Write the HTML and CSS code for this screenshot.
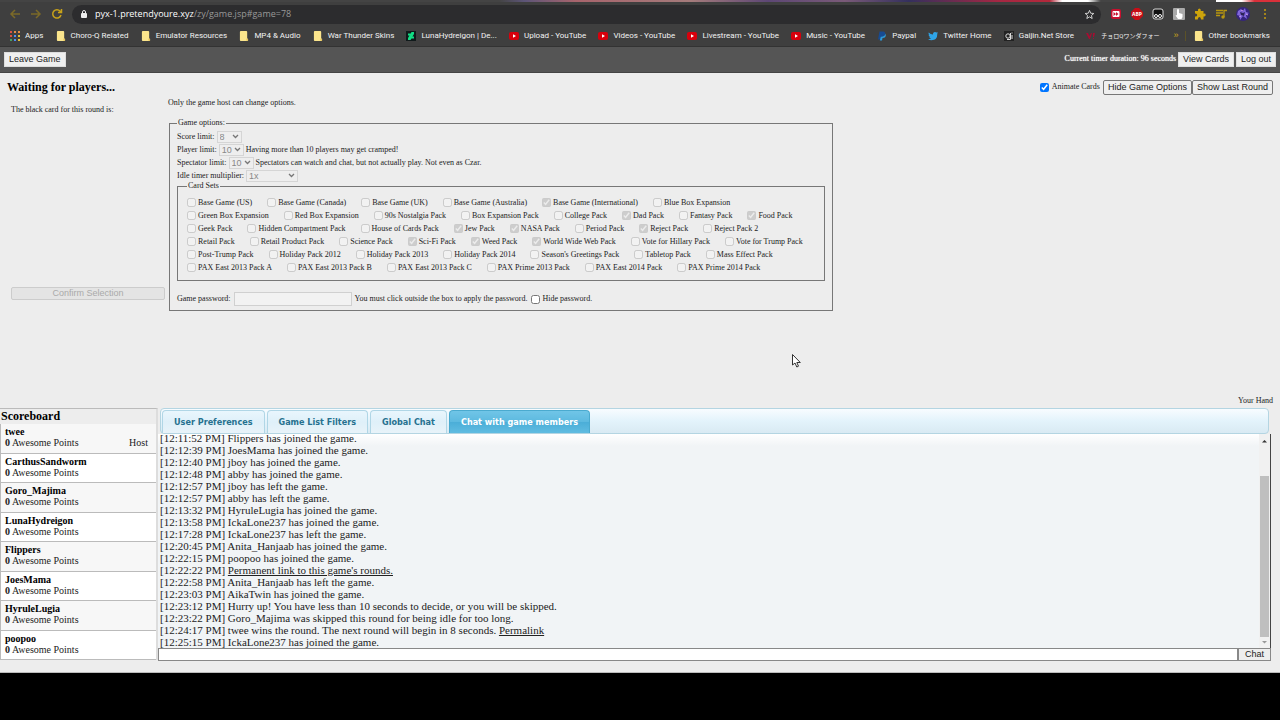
FILE: index.html
```
<!DOCTYPE html>
<html lang="en">
<head>
    <meta charset="UTF-8">
    <meta name="viewport" content="width=device-width, initial-scale=1.0">
    <title>Pretend You're Xyzzy</title>
    <link rel="stylesheet" href="styles.css">
</head>
<body>
    <svg class="defs" aria-hidden="true">
        <symbol id="folder" viewBox="0 0 9 11">
            <path d="M1 0H7Q8 0 8 1V8L9 9V10Q9 11 8 11H1Q0 11 0 10V1Q0 0 1 0Z" fill="#fbe58c"/>
            <path d="M7 8.500L9 8.500V11H7.500Z" fill="#e5c45d"/>
        </symbol>
        <symbol id="youtube" viewBox="0 0 10 8">
            <rect width="10" height="8" rx="2" fill="#d8000c"/>
            <path d="M4 2.300L7 4L4 5.700Z" fill="#fff"/>
        </symbol>
    </svg>

    <header class="browser">
        <div class="tab-strip"></div>
        <div class="toolbar">
            <button class="icon-button dim" aria-label="Back"><svg viewBox="0 0 12 12"><path d="M11 6H2M6 2L2 6L6 10"/></svg></button>
            <button class="icon-button dim" aria-label="Forward"><svg viewBox="0 0 12 12"><path d="M1 6H10M6 2L10 6L6 10"/></svg></button>
            <button class="icon-button" aria-label="Reload"><svg viewBox="0 0 12 12"><path d="M10 7A4.200 4.200 0 1 1 9.200 3.200L10.500 4.500M10.500 1V4.500H7"/></svg></button>
            <div class="address">
                <svg class="lock" viewBox="0 0 6 8"><rect y="3" width="6" height="5" rx="1" fill="#eee"/><path d="M1.500 3V2A1.500 1.500 0 0 1 4.500 2V3" fill="none" stroke="#eee"/></svg>
                <span class="url"><b>pyx-1.pretendyoure.xyz</b>/zy/game.jsp#game=78</span>
                <svg class="star" viewBox="0 0 12 12"><path d="M6 1.500L7.300 4.600L10.700 4.900L8.100 7.100L8.900 10.400L6 8.600L3.100 10.400L3.900 7.100L1.300 4.900L4.700 4.600Z" fill="none" stroke="#ddd"/></svg>
            </div>
            <div class="extensions">
                <svg viewBox="0 0 12 12"><rect x="1" y="1" width="10" height="10" rx="2" fill="#c8102e"/><rect x="2.500" y="3" width="7" height="6" rx="1" fill="#fff"/><path d="M3.500 4L6 6L3.500 8ZM6 4L8.500 6L6 8Z" fill="#c8102e"/></svg>
                <svg viewBox="0 0 12 12"><path d="M4 0H8L12 4V8L8 12H4L0 8V4Z" fill="#c70d16"/><text x="6" y="8" text-anchor="middle" font-size="5" font-weight="bold" fill="#fff">ABP</text></svg>
                <svg viewBox="0 0 12 12"><rect x="1" y="1" width="10" height="10" rx="2" fill="#111" stroke="#ddd"/><circle cx="4" cy="8" r="1.500" fill="none" stroke="#fff"/><circle cx="8" cy="8" r="1.500" fill="none" stroke="#fff"/></svg>
                <svg viewBox="0 0 12 12"><rect width="12" height="12" rx="1" fill="#aaa"/><path d="M4 1.500Q5 0.500 6 1.500V5L9.500 6V9L8.500 11H5L2.500 7.500L4 7Z" fill="#fff"/></svg>
                <svg viewBox="0 0 12 12"><path d="M1 3H4Q3.500 0.500 5.300 0.500T6.800 3H9.500V5.700Q11.700 5.200 11.700 7T9.500 8.400V11.500H7Q7 9 5.400 9T3.800 11.500H1V8.500Q3.200 8.700 3.200 7T1 5.500Z" fill="#cda40b"/></svg>
                <svg viewBox="0 0 12 12"><path d="M1 2.500H8M1 5H8M1 7.500H5M9 9V2.500H12" fill="none" stroke="#b8970f" stroke-width="1.300"/><circle cx="8" cy="9" r="1.700" fill="#b8970f"/></svg>
                <svg class="avatar" viewBox="0 0 14 14"><circle cx="7" cy="7" r="7" fill="#35257d"/><path d="M2 4L5 2L6 5L9 1L10 5L13 6L10 8L11 12L7 9L4 13L4 9L1 8Z" fill="#8066dc"/><path d="M4 5L7 6L9 5L8 9L5 8Z" fill="#2b2357"/><path d="M5 3L7 4M10 7L12 8M3 10L5 9" stroke="#d3a1f0"/></svg>
                <svg viewBox="0 0 12 12"><g fill="#c69d10"><circle cx="6" cy="2" r="1"/><circle cx="6" cy="6" r="1"/><circle cx="6" cy="10" r="1"/></g></svg>
            </div>
        </div>
        <nav class="bookmarks">
            <div class="bookmark-list">
                <a href="#"><svg viewBox="0 0 10 10"><path d="M0 0H2V2H0ZM0 4H2V6H0Z" fill="#dd5144"/><path d="M4 0H6V2H4ZM8 0H10V2H8Z" fill="#e58b45"/><path d="M4 4H6V6H4ZM4 8H6V10H4Z" fill="#4e8df5"/><path d="M8 4H10V6H8ZM8 8H10V10H8Z" fill="#e6bd35"/><path d="M0 8H2V10H0Z" fill="#44a363"/></svg>Apps</a>
                <a href="#"><svg><use href="#folder"/></svg>Choro-Q Related</a>
                <a href="#"><svg><use href="#folder"/></svg>Emulator Resources</a>
                <a href="#"><svg><use href="#folder"/></svg>MP4 &amp; Audio</a>
                <a href="#"><svg><use href="#folder"/></svg>War Thunder Skins</a>
                <a href="#"><svg viewBox="0 0 10 10"><rect width="10" height="10" fill="#101a1b"/><path d="M5.500 1H8V3L6.500 5.500H8V7.500H5.500L4.500 9H2V7L3.500 4.500H2V2.500H4.700Z" fill="#12dd83"/></svg>LunaHydreigon | De...</a>
                <a href="#"><svg><use href="#youtube"/></svg>Upload - YouTube</a>
                <a href="#"><svg><use href="#youtube"/></svg>Videos - YouTube</a>
                <a href="#"><svg><use href="#youtube"/></svg>Livestream - YouTube</a>
                <a href="#"><svg><use href="#youtube"/></svg>Music - YouTube</a>
                <a href="#"><svg viewBox="0 0 10 10"><path d="M2.500 0.500H6Q9 0.500 8 4Q7.300 6 4.500 6L4 8.500H1Z" fill="#174b93"/><path d="M8.700 2.500Q9.500 7 5.500 7L5 9.500H2.800L3.800 5.800Q7.500 6 8.700 2.500Z" fill="#2d9ada"/></svg>Paypal</a>
                <a href="#"><svg viewBox="0 0 10 10"><path d="M0.700 1.500Q2.500 3.500 5 3.600Q4.800 1 7 1Q8 1 8.500 1.500L9.800 1.200L9.300 2.700Q9.500 9 3.500 9.200Q1.500 9.200 0 8.200Q2 8.200 3 7.400Q1.500 7 1.100 5.800H2Q0.500 5 0.500 3.500L1.300 3.700Q0 2.500 0.700 1.500Z" fill="#2fa4e7"/></svg>Twitter Home</a>
                <a href="#"><svg viewBox="0 0 10 10"><rect width="10" height="10" fill="#222"/><circle cx="4" cy="5" r="2.200" fill="none" stroke="#ddd"/><path d="M6.500 2V8.500H3M8 4V8M8 1.500V2.500" fill="none" stroke="#ddd"/></svg>Gaijin.Net Store</a>
                <a href="#" class="japanese" lang="ja"><svg viewBox="0 0 10 10"><path d="M0 2H2L3.500 5L5 2H6L4 8H3ZM7 2H9L8 6H7ZM7 7H8V8H7Z" fill="#a50d32"/></svg>チョロQワンダフォー</a>
            </div>
            <button class="more" aria-label="More bookmarks">»</button>
            <a href="#" class="other"><svg><use href="#folder"/></svg>Other bookmarks</a>
        </nav>
    </header>

    <div class="menubar">
        <button>Leave Game</button>
        <span class="timer">Current timer duration: 96 seconds</span>
        <button>View Cards</button>
        <button>Log out</button>
    </div>

    <main class="game">
        <div class="game-header">
            <h1>Waiting for players...</h1>
            <div class="game-controls">
                <input type="checkbox" id="animate" checked>
                <label for="animate">Animate Cards</label>
                <div class="button-pair"><button>Hide Game Options</button><button>Show Last Round</button></div>
            </div>
        </div>
        <div class="game-body">
            <section class="black-card">
                <p>The black card for this round is:</p>
                <button disabled>Confirm Selection</button>
            </section>
            <section class="options">
                <p>Only the game host can change options.</p>
                <fieldset class="game-options">
                    <legend>Game options:</legend>
                    <div class="option-row"><label for="score">Score limit:</label><select id="score" disabled><option>8</option></select></div>
                    <div class="option-row"><label for="players">Player limit:</label><select id="players" disabled><option>10</option></select>Having more than 10 players may get cramped!</div>
                    <div class="option-row"><label for="spectators">Spectator limit:</label><select id="spectators" disabled><option>10</option></select>Spectators can watch and chat, but not actually play. Not even as Czar.</div>
                    <div class="option-row"><label for="idle">Idle timer multiplier:</label><select id="idle" class="wide" disabled><option>1x</option></select></div>
                    <fieldset class="card-sets">
                        <legend>Card Sets</legend>
                        <div class="set-row">
                            <label><input type="checkbox" disabled>Base Game (US)</label>
                            <label><input type="checkbox" disabled>Base Game (Canada)</label>
                            <label><input type="checkbox" disabled>Base Game (UK)</label>
                            <label><input type="checkbox" disabled>Base Game (Australia)</label>
                            <label><input type="checkbox" disabled checked>Base Game (International)</label>
                            <label><input type="checkbox" disabled>Blue Box Expansion</label>
                        </div>
                        <div class="set-row">
                            <label><input type="checkbox" disabled>Green Box Expansion</label>
                            <label><input type="checkbox" disabled>Red Box Expansion</label>
                            <label><input type="checkbox" disabled>90s Nostalgia Pack</label>
                            <label><input type="checkbox" disabled>Box Expansion Pack</label>
                            <label><input type="checkbox" disabled>College Pack</label>
                            <label><input type="checkbox" disabled checked>Dad Pack</label>
                            <label><input type="checkbox" disabled>Fantasy Pack</label>
                            <label><input type="checkbox" disabled checked>Food Pack</label>
                        </div>
                        <div class="set-row">
                            <label><input type="checkbox" disabled>Geek Pack</label>
                            <label><input type="checkbox" disabled>Hidden Compartment Pack</label>
                            <label><input type="checkbox" disabled>House of Cards Pack</label>
                            <label><input type="checkbox" disabled checked>Jew Pack</label>
                            <label><input type="checkbox" disabled checked>NASA Pack</label>
                            <label><input type="checkbox" disabled>Period Pack</label>
                            <label><input type="checkbox" disabled checked>Reject Pack</label>
                            <label><input type="checkbox" disabled>Reject Pack 2</label>
                        </div>
                        <div class="set-row">
                            <label><input type="checkbox" disabled>Retail Pack</label>
                            <label><input type="checkbox" disabled>Retail Product Pack</label>
                            <label><input type="checkbox" disabled>Science Pack</label>
                            <label><input type="checkbox" disabled checked>Sci-Fi Pack</label>
                            <label><input type="checkbox" disabled checked>Weed Pack</label>
                            <label><input type="checkbox" disabled checked>World Wide Web Pack</label>
                            <label><input type="checkbox" disabled>Vote for Hillary Pack</label>
                            <label><input type="checkbox" disabled>Vote for Trump Pack</label>
                        </div>
                        <div class="set-row">
                            <label><input type="checkbox" disabled>Post-Trump Pack</label>
                            <label><input type="checkbox" disabled>Holiday Pack 2012</label>
                            <label><input type="checkbox" disabled>Holiday Pack 2013</label>
                            <label><input type="checkbox" disabled>Holiday Pack 2014</label>
                            <label><input type="checkbox" disabled>Season's Greetings Pack</label>
                            <label><input type="checkbox" disabled>Tabletop Pack</label>
                            <label><input type="checkbox" disabled>Mass Effect Pack</label>
                        </div>
                        <div class="set-row">
                            <label><input type="checkbox" disabled>PAX East 2013 Pack A</label>
                            <label><input type="checkbox" disabled>PAX East 2013 Pack B</label>
                            <label><input type="checkbox" disabled>PAX East 2013 Pack C</label>
                            <label><input type="checkbox" disabled>PAX Prime 2013 Pack</label>
                            <label><input type="checkbox" disabled>PAX East 2014 Pack</label>
                            <label><input type="checkbox" disabled>PAX Prime 2014 Pack</label>
                        </div>
                    </fieldset>
                    <div class="password-row">
                        <label for="password">Game password:</label>
                        <input type="text" id="password" disabled>
                        <span>You must click outside the box to apply the password.</span>
                        <input type="checkbox" id="hide-password">
                        <label for="hide-password">Hide password.</label>
                    </div>
                </fieldset>
            </section>
        </div>
        <p class="hand">Your Hand</p>
    </main>

    <div class="bottom">
        <aside class="scoreboard">
            <h2>Scoreboard</h2>
            <div class="score-card"><b>twee</b><span><b>0</b> Awesome Points</span><span class="status">Host</span></div>
            <div class="score-card"><b>CarthusSandworm</b><span><b>0</b> Awesome Points</span></div>
            <div class="score-card"><b>Goro_Majima</b><span><b>0</b> Awesome Points</span></div>
            <div class="score-card"><b>LunaHydreigon</b><span><b>0</b> Awesome Points</span></div>
            <div class="score-card"><b>Flippers</b><span><b>0</b> Awesome Points</span></div>
            <div class="score-card"><b>JoesMama</b><span><b>0</b> Awesome Points</span></div>
            <div class="score-card"><b>HyruleLugia</b><span><b>0</b> Awesome Points</span></div>
            <div class="score-card"><b>poopoo</b><span><b>0</b> Awesome Points</span></div>
        </aside>
        <section class="chat">
            <nav class="tabs">
                <a href="#">User Preferences</a>
                <a href="#">Game List Filters</a>
                <a href="#">Global Chat</a>
                <a href="#" class="active">Chat with game members</a>
            </nav>
            <div class="log-wrap">
                <div class="log">
                    <p>[12:11:52 PM] Flippers has joined the game.</p>
                    <p>[12:12:39 PM] JoesMama has joined the game.</p>
                    <p>[12:12:40 PM] jboy has joined the game.</p>
                    <p>[12:12:48 PM] abby has joined the game.</p>
                    <p>[12:12:57 PM] jboy has left the game.</p>
                    <p>[12:12:57 PM] abby has left the game.</p>
                    <p>[12:13:32 PM] HyruleLugia has joined the game.</p>
                    <p>[12:13:58 PM] IckaLone237 has joined the game.</p>
                    <p>[12:17:28 PM] IckaLone237 has left the game.</p>
                    <p>[12:20:45 PM] Anita_Hanjaab has joined the game.</p>
                    <p>[12:22:15 PM] poopoo has joined the game.</p>
                    <p>[12:22:22 PM] <a href="#">Permanent link to this game's rounds.</a></p>
                    <p>[12:22:58 PM] Anita_Hanjaab has left the game.</p>
                    <p>[12:23:03 PM] AikaTwin has joined the game.</p>
                    <p>[12:23:12 PM] Hurry up! You have less than 10 seconds to decide, or you will be skipped.</p>
                    <p>[12:23:22 PM] Goro_Majima was skipped this round for being idle for too long.</p>
                    <p>[12:24:17 PM] twee wins the round. The next round will begin in 8 seconds. <a href="#">Permalink</a></p>
                    <p>[12:25:15 PM] IckaLone237 has joined the game.</p>
                </div>
                <div class="scrollbar">
                    <svg viewBox="0 0 8 8"><path d="M1.500 5.500L4 3L6.500 5.500Z" fill="#333"/></svg>
                    <div class="thumb"></div>
                    <svg viewBox="0 0 8 8"><path d="M1.500 3L4 5.500L6.500 3Z" fill="#999"/></svg>
                </div>
            </div>
            <form class="chat-form">
                <input type="text" aria-label="Chat message">
                <button type="button">Chat</button>
            </form>
        </section>
    </div>
    <footer class="blank"></footer>
    <svg class="cursor" viewBox="0 0 9 14"><path d="M0.500 0.500V11L3 9L4.800 13L6.500 12.200L4.800 8.500H8.300Z" fill="#fff" stroke="#333"/></svg>
</body>
</html>
```
FILE: styles.css
```
* {
    margin: 0;
    padding: 0;
    box-sizing: border-box;
}
body {
    min-height: 100vh;
    display: flex;
    flex-direction: column;
    font-family: "Liberation Serif", serif;
    font-size: 8px;
    line-height: 10px;
    color: #222;
    background: #ededed;
}
button {
    font-family: "Liberation Sans", sans-serif;
    font-size: 9px;
    line-height: 11px;
    color: #222;
}
.defs {
    display: none;
}

/* Browser chrome */
.browser {
    background: #3f3f3f;
    border-bottom: 1px solid #333;
    font-family: "Open Sans", sans-serif;
    color: #eee;
}
.tab-strip {
    height: 2px;
    background: linear-gradient(90deg, #444 0 39%, #5d5578 41%, #a8646c 45%, #a47b7b 54%, #5d4775 60%, #7a5a78 66%, #34305e 71%, #a52743 78%, #b3283b 82%, #fff 83% 85%, #444 86% 95%, #fff 95% 97%, #d9303a 98%);
}
.toolbar {
    display: flex;
    align-items: center;
    height: 23px;
    padding: 1px 9px 0;
}
.icon-button {
    width: 12px;
    height: 12px;
    margin-right: 9px;
    border: none;
    background: none;
}
.icon-button svg {
    display: block;
    fill: none;
    stroke: #c8a21a;
    stroke-width: 1.5;
}
.icon-button.dim svg {
    stroke: #7b6a28;
}
.address {
    flex: 1;
    display: flex;
    align-items: center;
    height: 19px;
    padding: 0 6px 0 9px;
    border-radius: 10px;
    background: #2c2c2e;
}
.lock {
    width: 6px;
    height: 8px;
    margin-right: 8px;
}
.url {
    flex: 1;
    font-size: 9px;
    color: #999;
}
.url b {
    font-weight: normal;
    color: #fff;
}
.star {
    width: 11px;
    height: 11px;
}
.extensions {
    display: flex;
    align-items: center;
    gap: 9px;
    padding-left: 9px;
}
.extensions svg {
    width: 12px;
    height: 12px;
}
.extensions .avatar {
    width: 14px;
    height: 14px;
}
.bookmarks {
    display: flex;
    align-items: center;
    height: 21px;
    padding: 0 10px;
    font-family: Roboto, "Noto Sans CJK JP", sans-serif;
    font-size: 8px;
}
.bookmarks a {
    display: flex;
    align-items: center;
    gap: 5px;
    color: #f2f2f2;
    text-decoration: none;
    white-space: nowrap;
}
.bookmarks svg {
    width: 10px;
    height: 10px;
}
.bookmark-list {
    flex: 1;
    display: flex;
    justify-content: space-between;
}
.bookmarks .japanese {
    font-size: 6px;
}
.more {
    margin: 0 6px 0 14px;
    border: none;
    background: none;
    color: #c8a21a;
}
.other {
    padding-left: 8px;
    border-left: 1px solid #5c5228;
}

/* Game menu */
.menubar {
    display: flex;
    align-items: center;
    gap: 2px;
    height: 26px;
    padding: 0 4px 1px;
    background: #555;
    border-bottom: 1px solid #444;
    color: #fff;
}
.menubar button {
    padding: 1px 4px;
    border: 1px solid #ddd;
    background: #efefef;
}
.timer {
    margin-left: auto;
    text-shadow: 0 0 1px #fff;
}

/* Game area */
.game {
    flex: 1;
    display: flex;
    flex-direction: column;
    padding: 6px 7px 2px;
}
.game-header {
    display: flex;
    justify-content: space-between;
    height: 19px;
}
h1 {
    font-size: 12px;
    line-height: 16px;
    color: #000;
}
.game-controls {
    display: flex;
    align-items: center;
    gap: 3px;
    height: 16px;
}
.game-controls button {
    padding: 1px 4px;
    border: 1px solid #777;
    border-radius: 2px;
    background: #efefef;
}
input[type="checkbox"] {
    width: 9px;
    height: 9px;
}
.button-pair {
    display: flex;
}
.game-body {
    display: flex;
}
.black-card {
    width: 161px;
    padding: 7px 3px 11px 4px;
    display: flex;
    flex-direction: column;
    justify-content: space-between;
}
.black-card button {
    width: 100%;
    border: 1px solid #ccc;
    border-radius: 2px;
    background: #e4e4e4;
    color: #aaa;
}
.game-options {
    width: 664px;
    margin: 10px 0 0 1px;
    padding: 2px 7px 4px 7px;
    border: 1px solid #777;
}
legend {
    padding: 0 1px;
}
.option-row {
    display: flex;
    align-items: center;
    gap: 2px;
    height: 13px;
}
select {
    width: 25px;
    height: 12px;
    padding-left: 2px;
    appearance: none;
    border: 1px solid #d5d5d5;
    background: #eee url("data:image/svg+xml,%3Csvg xmlns='http://www.w3.org/2000/svg' width='7' height='5'%3E%3Cpath d='M1 1L3.500 3.500L6 1' fill='none' stroke='%23777' stroke-width='1.300'/%3E%3C/svg%3E") no-repeat right 2px center;
    font-family: "Liberation Sans", sans-serif;
    font-size: 9px;
    color: #888;
}
select:disabled {
    opacity: 1;
}
select.wide {
    width: 52px;
}
.card-sets {
    margin-top: -1px;
    padding: 5px 9px 6px;
    border: 1px solid #777;
}
.set-row {
    display: flex;
    gap: 15px;
    height: 13px;
}
.set-row label {
    display: flex;
    align-items: center;
    gap: 2px;
}
.password-row {
    display: flex;
    align-items: center;
    gap: 3px;
    padding-top: 11px;
}
.password-row input[type="text"] {
    width: 118px;
    height: 14px;
    border: 1px solid #d0d0d0;
    background: #f2f2f2;
}
.hand {
    margin-top: auto;
    text-align: right;
}

/* Scoreboard and chat */
.bottom {
    display: flex;
    height: 265px;
    padding-bottom: 11px;
    border-bottom: 1px solid #bbb;
}
.scoreboard {
    width: 158px;
    display: flex;
    flex-direction: column;
    margin-bottom: 1px;
    border-top: 1px solid #bbb;
    border-right: 2px solid #ddd;
    font-size: 10px;
    line-height: 11px;
    color: #000;
}
h2 {
    padding: 0 1px 1px;
    font-size: 12px;
    line-height: 14px;
}
.score-card {
    flex: 1;
    display: grid;
    grid-template-columns: 1fr auto;
    align-content: start;
    padding: 2px 8px 0 4px;
    border-left: 1px solid #bbb;
    border-bottom: 1px solid #bbb;
    background: #fff;
}
.score-card:nth-child(even) {
    background: #f7f7f7;
}
.score-card > b {
    grid-column: 1 / 3;
}
.score-card span {
    color: #222;
}
.chat {
    flex: 1;
    display: flex;
    flex-direction: column;
    padding-right: 9px;
    min-width: 0;
}
.tabs {
    display: flex;
    align-items: flex-end;
    gap: 2px;
    height: 26px;
    margin: 0 2px;
    padding-left: 1px;
    border: 1px solid #b4d5e2;
    border-radius: 4px;
    background: linear-gradient(#f8fcff, #e3f3fb 50%, #d9eaf3);
}
.tabs a {
    padding: 5px 11px;
    border: 1px solid #b0d6e6;
    border-bottom: none;
    border-radius: 4px 4px 0 0;
    background: linear-gradient(#e9f6fd, #dff0f9 50%, #e8f3f9);
    font-family: "DejaVu Sans Condensed", "DejaVu Sans", sans-serif;
    font-size: 9px;
    font-weight: bold;
    line-height: 12px;
    color: #26718f;
    text-decoration: none;
}
.tabs .active {
    border-color: #4aaacf;
    background: linear-gradient(#70c5e7, #5cb9df 50%, #4baed8 51%, #60bce1);
    color: #fff;
}
.log-wrap {
    flex: 1;
    display: flex;
    min-height: 0;
    border-right: 1px solid #444;
    background: linear-gradient(#fff, #f1f4f6 12px);
}
.log {
    flex: 1;
    display: flex;
    flex-direction: column;
    justify-content: flex-end;
    overflow: hidden;
    padding-left: 2px;
    font-size: 11px;
    line-height: 12px;
}
.log a {
    color: #222;
}
.scrollbar {
    display: flex;
    flex-direction: column;
    width: 11px;
    padding: 3px 1px 2px;
    background: #f1f1f1;
}
.scrollbar svg {
    width: 9px;
    height: 8px;
}
.thumb {
    flex: 1;
    margin: 31px 0 1px;
    background: #bfbfbf;
}
.chat-form {
    display: flex;
    height: 13px;
}
.chat-form input {
    flex: 1;
    border: 1px solid #888;
    background: #fff;
}
.chat-form button {
    padding: 0 6px;
    border: 1px solid #888;
    background: #eee;
}
.blank {
    height: 47px;
    background: #000;
}
.cursor {
    position: absolute;
    left: 792px;
    top: 354px;
    width: 9px;
    height: 14px;
}
```
